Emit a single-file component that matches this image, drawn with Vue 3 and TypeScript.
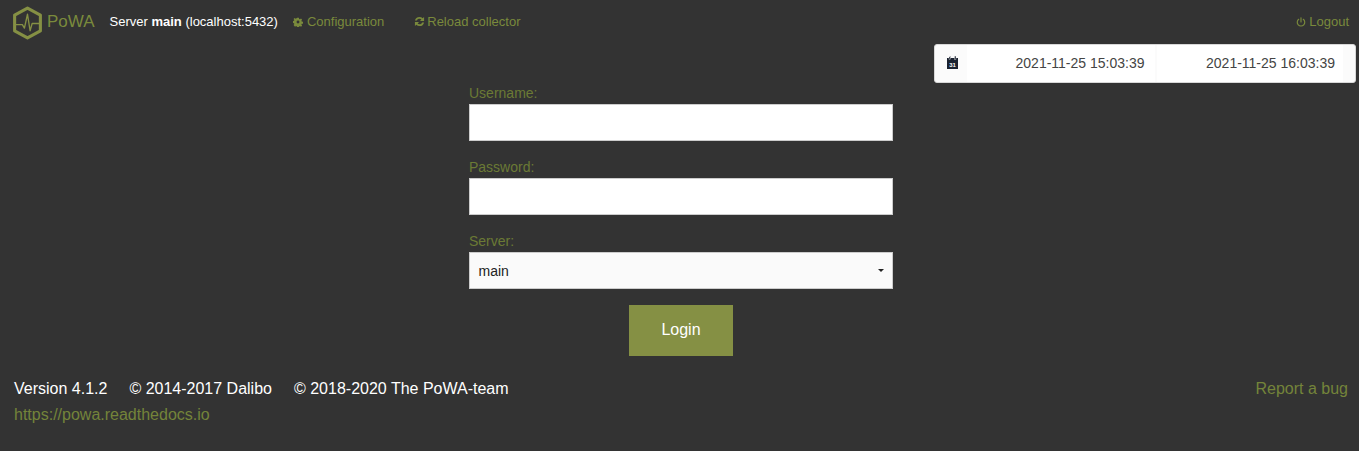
<template>
  <div class="page">
    <header class="topbar">
      <a class="brand">
        <svg class="logo" viewBox="0 0 30 33" fill="none" stroke="currentColor">
          <path d="M15 2 L27.500 8.800 V24.200 L15 31 L2.500 24.200 V8.800 Z" stroke-width="3" stroke-linejoin="round" />
          <path d="M3.500 18 H10 L12 21.500 L15 8 L17.500 24 L19.500 17 H26.500" stroke-width="1.300" stroke-linejoin="round" />
        </svg>
        <span class="brand-name">PoWA</span>
      </a>
      <span class="server">Server <b>main</b> (localhost:5432)</span>
      <a class="nav-link config">
        <svg class="icon" viewBox="0 0 24 24" fill="currentColor">
          <path fill-rule="evenodd" d="M9.500 0h5l.7 3.700 2.100.9 3.100-2.100 3.100 3.100-2.100 3.100.9 2.100 3.700.7v5l-3.700.7-.9 2.100 2.100 3.100-3.100 3.100-3.100-2.100-2.100.9-.7 3.700h-5l-.7-3.700-2.100-.9-3.100 2.100L-.4 20.400l2.100-3.100-.9-2.100L-3 14.500v-5l3.700-.7.9-2.100-2.100-3.100L2.600 .5l3.100 2.100 2.100-.9zM12 8a4 4 0 1 0 0 8 4 4 0 0 0 0-8z" transform="translate(1.700 1.700) scale(.86)" />
        </svg>
        Configuration
      </a>
      <a class="nav-link reload">
        <svg class="icon" viewBox="0 0 24 24" fill="currentColor">
          <path d="M12 2a10 10 0 0 1 7 2.900L22 2v9h-9l3.200-3.200A6 6 0 0 0 6.300 10H2.100A10 10 0 0 1 12 2z" />
          <path d="M12 22a10 10 0 0 1-7-2.900L2 22v-9h9l-3.200 3.200a6 6 0 0 0 9.900-2.200h4.200A10 10 0 0 1 12 22z" />
        </svg>
        Reload collector
      </a>
      <a class="nav-link logout">
        <svg class="icon" viewBox="0 0 24 24" fill="none" stroke="currentColor" stroke-width="2.800" stroke-linecap="round">
          <path d="M12 2v10" />
          <path d="M6.500 5.500a9 9 0 1 0 11 0" />
        </svg>
        Logout
      </a>
    </header>

    <main class="content">
      <form class="login" @submit.prevent>
        <label class="field">
          <span class="field-label">Username:</span>
          <input class="text-input" type="text" />
        </label>
        <label class="field">
          <span class="field-label">Password:</span>
          <input class="text-input" type="password" />
        </label>
        <label class="field">
          <span class="field-label">Server:</span>
          <span class="select">
            <span>{{ server }}</span>
            <i class="caret"></i>
          </span>
        </label>
        <button class="login-btn" type="submit">Login</button>
      </form>

      <div class="picker">
        <svg class="cal" viewBox="0 0 11 13">
          <rect x="0" y="2" width="11" height="11" fill="#1b2230" />
          <rect x="2" y="0" width="1.500" height="3.500" fill="#1b2230" stroke="#fff" stroke-width=".4" />
          <rect x="7.500" y="0" width="1.500" height="3.500" fill="#1b2230" stroke="#fff" stroke-width=".4" />
          <text x="5.500" y="11" text-anchor="middle" class="cal-day">31</text>
        </svg>
        <span class="date from">2021-11-25 15:03:39</span>
        <span class="date to">2021-11-25 16:03:39</span>
      </div>
    </main>

    <footer class="footer">
      <div class="footer-left">
        <div class="credits">
          <span v-for="c in credits" :key="c">{{ c }}</span>
        </div>
        <a class="foot-link">https://powa.readthedocs.io</a>
      </div>
      <a class="foot-link">Report a bug</a>
    </footer>
  </div>
</template>

<script setup lang="ts">
const server = 'main'
const credits: string[] = ['Version 4.1.2', '© 2014-2017 Dalibo', '© 2018-2020 The PoWA-team']
</script>

<style>
html,
body {
  margin: 0;
  background: #333333;
}
</style>

<style scoped>
.page {
  height: 451px;
  overflow: hidden;
  background: #333333;
  font-family: "Liberation Sans", Arial, sans-serif;
  color: #fff;
}

.topbar {
  display: flex;
  align-items: center;
  height: 44px;
  font-size: 13px;
  padding-bottom: 1px;
  box-sizing: border-box;
}

.brand {
  display: flex;
  align-items: center;
  margin-left: 12px;
  color: #859044;
}

.logo {
  width: 31px;
  height: 34px;
  margin-top: 2px;
}

.brand-name {
  margin-left: 4px;
  font-size: 17px;
  color: #7a8a3c;
}

.server {
  margin-left: 15px;
}

.nav-link {
  display: flex;
  align-items: center;
  gap: 4px;
  color: #7a8a3c;
}

.config {
  margin-left: 15px;
}

.reload {
  margin-left: 30px;
  gap: 2px;
}

.logout {
  margin-left: auto;
  margin-right: 10px;
  gap: 3px;
}

.icon {
  width: 10px;
  height: 10px;
}

.reload .icon {
  width: 11px;
  height: 11px;
}

.content {
  display: grid;
  grid-template-columns: 469px 424px 1fr;
}

.login {
  grid-column: 2;
  padding-top: 38px;
}

.field {
  display: block;
  margin-bottom: 15px;
}

.field-label {
  display: block;
  height: 22px;
  line-height: 22px;
  font-size: 14px;
  color: #6b7a35;
}

.text-input,
.select {
  display: flex;
  align-items: center;
  justify-content: space-between;
  box-sizing: border-box;
  width: 424px;
  height: 37px;
  border: 1px solid #cccccc;
  border-radius: 0;
  background: #fff;
  outline: none;
  margin: 0;
}

.select {
  background: #fafafa;
  color: #222222;
  font-size: 14px;
  padding: 0 9px 0 8.500px;
}

.caret {
  width: 0;
  height: 0;
  margin-right: -1px;
  border-left: 3px solid transparent;
  border-right: 3px solid transparent;
  border-top: 3px solid #222;
}

.login-btn {
  display: block;
  width: 104px;
  height: 51px;
  margin: 16px auto 0;
  padding: 0 0 2px;
  border: 0;
  background: #859044;
  color: #fff;
  font-family: inherit;
  font-size: 16px;
}

.picker {
  grid-column: 3;
  align-self: start;
  display: flex;
  align-items: center;
  box-sizing: border-box;
  width: 422px;
  height: 39px;
  margin-left: 41px;
  padding-left: 12px;
  background: #fbfbfb;
  border: 1px solid #d8d8d8;
  border-radius: 3px;
  color: #444444;
  font-size: 14px;
}

.cal {
  width: 11px;
  height: 13px;
  margin-top: -2px;
  margin-right: 9px;
}

.cal-day {
  font-size: 6px;
  font-weight: 700;
  fill: #fff;
}

.date {
  display: block;
  align-self: stretch;
  line-height: 37px;
  text-align: right;
  background: #fff;
  box-sizing: border-box;
}

.from {
  width: 188px;
  padding-right: 10.500px;
}

.to {
  width: 186px;
  margin-left: 2px;
  padding-right: 8px;
}

.footer {
  display: flex;
  justify-content: space-between;
  align-items: flex-start;
  margin-top: 21px;
  padding: 0 11px 0 14px;
  font-size: 16px;
}

.credits {
  display: flex;
  gap: 22px;
  height: 26px;
  line-height: 24px;
}

.foot-link {
  line-height: 24px;
  color: #74843a;
}
</style>
